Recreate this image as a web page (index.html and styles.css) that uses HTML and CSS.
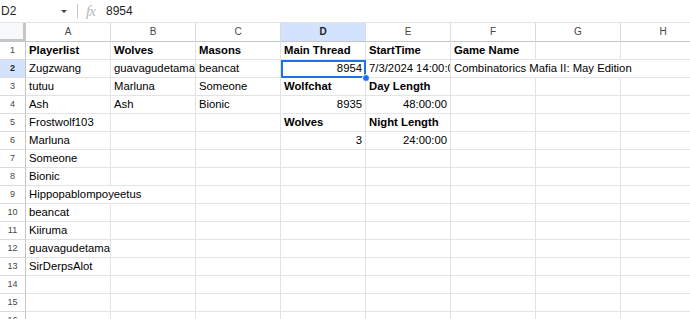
FILE: index.html
```html
<!DOCTYPE html>
<html lang="en">
<head>
    <meta charset="UTF-8">
    <meta name="viewport" content="width=device-width, initial-scale=1.0">
    <title>Combinatorics Mafia II</title>
    <link rel="stylesheet" href="styles.css">
</head>
<body>
    <div class="formula-bar">
        <div class="name-box">
            <span>D2</span>
            <span class="caret"></span>
        </div>
        <div class="fx">fx</div>
        <div class="formula">8954</div>
    </div>
    <div class="grid" id="grid"></div>

    <script>
        // isi sheet: [teks, kelas]
        const columns = ["A", "B", "C", "D", "E", "F", "G", "H"];
        const data = {
            1: [["Playerlist", "b"], ["Wolves", "b"], ["Masons", "b"], ["Main Thread", "b"], ["StartTime", "b"], ["Game Name", "b"]],
            2: [["Zugzwang"], ["guavagudetama"], ["beancat"], ["8954", "r sel"], ["7/3/2024 14:00:00"], ["Combinatorics Mafia II: May Edition", "spill"], ["", "spill"]],
            3: [["tutuu"], ["Marluna"], ["Someone"], ["Wolfchat", "b"], ["Day Length", "b"]],
            4: [["Ash"], ["Ash"], ["Bionic"], ["8935", "r"], ["48:00:00", "r"]],
            5: [["Frostwolf103"], [""], [""], ["Wolves", "b"], ["Night Length", "b"]],
            6: [["Marluna"], [""], [""], ["3", "r"], ["24:00:00", "r"]],
            7: [["Someone"]],
            8: [["Bionic"]],
            9: [["Hippopablompoyeetus", "spill"]],
            10: [["beancat"]],
            11: [["Kiiruma"]],
            12: [["guavagudetama"]],
            13: [["SirDerpsAlot"]]
        };
        const activeRow = 2;
        const activeCol = "D";
        const grid = document.getElementById("grid");

        function add(cls, text) {
            const div = document.createElement("div");
            div.className = cls;
            div.textContent = text || "";
            grid.appendChild(div);
        }

        add("corner");
        columns.forEach(c => add(c === activeCol ? "col-head active" : "col-head", c));

        for (let r = 1; r <= 16; r++) {
            add(r === activeRow ? "row-head active" : "row-head", r);
            const row = data[r] || [];
            for (let i = 0; i < columns.length; i++) {
                const cell = row[i] || [""];
                add("cell " + (cell[1] || ""), cell[0]);
            }
        }
    </script>
</body>
</html>
```

FILE: styles.css
```css
body {
    margin: 0;
    padding: 0;
    background: #ffffff;
    font-family: "Liberation Sans", Arial, sans-serif;
    color: #000000;
    overflow: hidden;
}
.formula-bar {
    display: flex;
    align-items: center;
    height: 22px;
    border-bottom: 1px solid #e1e3e1;
    font-size: 12px;
    color: #1f1f1f;
}
.name-box {
    display: flex;
    align-items: center;
    justify-content: space-between;
    width: 66px;
    padding: 0 10px 0 1px;
    border-right: 1px solid #c4c7c5;
    height: 14px;
}
.caret {
    width: 0;
    height: 0;
    border-left: 3px solid transparent;
    border-right: 3px solid transparent;
    border-top: 3px solid #444746;
}
.fx {
    margin-left: 8px;
    width: 20px;
    font-family: "Liberation Serif", serif;
    font-style: italic;
    font-size: 15px;
    color: #b4b6b8;
    letter-spacing: -1px;
}
.grid {
    display: grid;
    grid-template-columns: 26px repeat(8, 85px);
    grid-template-rows: 19px;
    grid-auto-rows: 18px;
    width: 706px;
}
.grid > div {
    box-sizing: border-box;
    white-space: nowrap;
}
.corner {
    background: #f8f9fa;
    border-right: 3px solid #c4c7c5;
    border-bottom: 3px solid #c4c7c5;
}
.col-head {
    border-right: 1px solid #dadce0;
    border-bottom: 1px solid #c4c7c5;
    font-size: 10px;
    line-height: 18px;
    text-align: center;
    color: #444746;
}
.row-head {
    border-right: 1px solid #c4c7c5;
    border-bottom: 1px solid #dadce0;
    font-size: 9px;
    line-height: 17px;
    text-align: center;
    color: #444746;
}
.active {
    background: #d3e3fd;
    color: #1f1f1f;
    font-weight: bold;
}
.cell {
    border-right: 1px solid #e2e3e3;
    border-bottom: 1px solid #e2e3e3;
    font-size: 11.3px;
    line-height: 17px;
    padding: 0 3px;
    overflow: hidden;
}
.cell.b {
    font-weight: bold;
}
.cell.r {
    text-align: right;
}
.cell.spill {
    overflow: visible;
    border-right-color: transparent;
}
.cell.sel {
    position: relative;
    overflow: visible;
}
.cell.sel::before {
    content: "";
    position: absolute;
    left: 0;
    top: 0;
    right: -1px;
    bottom: -1px;
    border: 2px solid #1a73e8;
}
.cell.sel::after {
    content: "";
    position: absolute;
    right: -5px;
    bottom: -5px;
    width: 6px;
    height: 6px;
    border-radius: 50%;
    background: #1a73e8;
    border: 1px solid #ffffff;
}
```
